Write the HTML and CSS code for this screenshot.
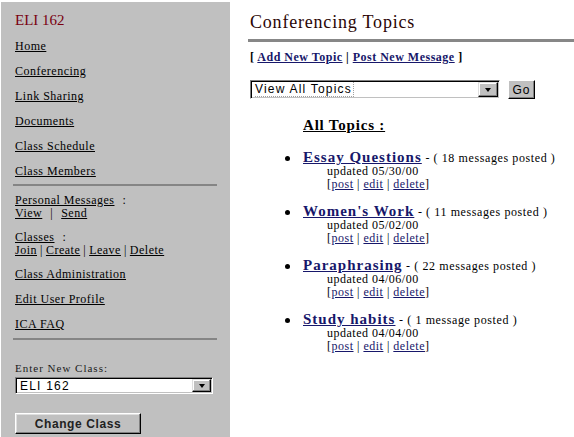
FILE: index.html
```html
<!DOCTYPE html>
<html>
<head>
<meta charset="utf-8">
<title>Conferencing Topics</title>
<link rel="stylesheet" href="styles.css">
</head>
<body>
<div class="page">
  <aside class="side">
    <div class="cls">ELI 162</div>
    <nav class="nav">
      <a href="#">Home</a>
      <a href="#">Conferencing</a>
      <a href="#">Link Sharing</a>
      <a href="#">Documents</a>
      <a href="#">Class Schedule</a>
      <a href="#">Class Members</a>
    </nav>
    <div class="rule"></div>
    <div class="group">
      <div><a href="#">Personal Messages</a><span class="colon">:</span></div>
      <div><a href="#">View</a><span class="sep wide">|</span><a href="#">Send</a></div>
    </div>
    <div class="group group2">
      <div><a href="#">Classes</a><span class="colon">:</span></div>
      <div><a href="#">Join</a><span class="sep">|</span><a href="#">Create</a><span class="sep">|</span><a href="#">Leave</a><span class="sep">|</span><a href="#">Delete</a></div>
    </div>
    <nav class="nav nav2">
      <a href="#">Class Administration</a>
      <a href="#">Edit User Profile</a>
      <a href="#">ICA FAQ</a>
    </nav>
    <div class="rule rule2"></div>
    <div class="label">Enter New Class:</div>
    <div class="sel side-sel">
      <span class="sel-text">ELI 162</span>
      <span class="arrow-btn"><span class="arrow"></span></span>
    </div>
    <div class="btn">Change Class</div>
  </aside>

  <main class="main">
    <h1 class="title">Conferencing Topics</h1>
    <div class="hr-main"></div>
    <div class="actions">[ <a href="#">Add New Topic</a> | <a href="#">Post New Message</a> ]</div>
    <div class="view-row">
      <div class="sel main-sel">
        <span class="sel-text"><span class="focus">View All Topics</span></span>
        <span class="arrow-btn"><span class="arrow"></span></span>
      </div>
      <div class="go">Go</div>
    </div>
    <div class="all">All Topics :</div>
    <ul class="topics">
      <li class="topic">
        <div class="trow"><span class="dot"></span><a class="tname" href="#">Essay Questions</a><span class="count"> - ( 18 messages posted )</span></div>
        <div class="tmeta">updated 05/30/00</div>
        <div class="tmeta">[<a href="#">post</a> | <a href="#">edit</a> | <a href="#">delete</a>]</div>
      </li>
      <li class="topic">
        <div class="trow"><span class="dot"></span><a class="tname" href="#">Women's Work</a><span class="count"> - ( 11 messages posted )</span></div>
        <div class="tmeta">updated 05/02/00</div>
        <div class="tmeta">[<a href="#">post</a> | <a href="#">edit</a> | <a href="#">delete</a>]</div>
      </li>
      <li class="topic">
        <div class="trow"><span class="dot"></span><a class="tname" href="#">Paraphrasing</a><span class="count"> - ( 22 messages posted )</span></div>
        <div class="tmeta">updated 04/06/00</div>
        <div class="tmeta">[<a href="#">post</a> | <a href="#">edit</a> | <a href="#">delete</a>]</div>
      </li>
      <li class="topic">
        <div class="trow"><span class="dot"></span><a class="tname" href="#">Study habits</a><span class="count"> - ( 1 message posted )</span></div>
        <div class="tmeta">updated 04/04/00</div>
        <div class="tmeta">[<a href="#">post</a> | <a href="#">edit</a> | <a href="#">delete</a>]</div>
      </li>
    </ul>
  </main>
</div>
</body>
</html>
```

FILE: styles.css
```css
* { box-sizing: border-box; }
html, body { margin: 0; padding: 0; height: 100%; }
body {
  background: #fff;
  color: #000;
  font-family: "Liberation Serif", "Times New Roman", serif;
  overflow: hidden;
}
.page { display: flex; height: 437px; }

/* ---------- sidebar ---------- */
.side {
  width: 229px;
  flex: none;
  margin: 2px 0 0 1px;
  background: #c0c0c0;
  padding: 9px 0 0 14px;
  font-size: 12px;
  letter-spacing: 0.5px;
}
.side a { color: #000; text-decoration: underline; }
.cls {
  font-size: 15px;
  line-height: 18px;
  letter-spacing: 0;
  color: #7a0010;
  margin-bottom: 5px;
}
.nav a { display: block; line-height: 25px; width: max-content; }
.rule {
  width: 204px;
  height: 2px;
  margin-left: -2px;
  background: #858585;
}
.group { margin-top: 8px; line-height: 13px; }
.group2 { margin-top: 11px; }
.colon { margin-left: 8px; }
.sep { margin: 0 3px; }
.sep.wide { margin: 0 8px; }
.nav2 { margin-top: 5px; }
.rule2 { margin-top: 1px; }
.label {
  margin-top: 22px;
  font-size: 11px;
  line-height: 13px;
  letter-spacing: 1px;
  color: #1a1a1a;
}

/* ---------- fake selects & buttons ---------- */
.sel {
  display: flex;
  align-items: center;
  background: #fff;
  border: 1px solid;
  border-color: #808080 #fff #fff #808080;
  box-shadow: inset 1px 1px #000, inset -1px -1px #c0c0c0;
  font-family: "Liberation Sans", Arial, sans-serif;
  font-size: 12px;
  letter-spacing: 1.2px;
  color: #000;
}
.sel-text { padding-left: 4px; line-height: 13px; }
.focus { border: 1px dotted #a0a0a0; border-left: none; border-top: none; padding-right: 1px; }
.arrow-btn {
  margin-left: auto;
  margin-right: 1px;
  display: flex;
  align-items: center;
  justify-content: center;
  background: #c0c0c0;
  border: 1px solid;
  border-color: #dfdfdf #000 #000 #dfdfdf;
  box-shadow: inset -1px -1px #808080, inset 1px 1px #fff;
}
.arrow {
  width: 0;
  height: 0;
  border-left: 3.5px solid transparent;
  border-right: 3.5px solid transparent;
  border-top: 4px solid #000;
}
.side-sel { margin-top: 2px; width: 198px; height: 17px; }
.side-sel .sel-text { padding-top: 2px; }
.side-sel .arrow-btn { width: 19px; height: 13px; }
.btn {
  margin-top: 19px;
  width: 126px;
  height: 21px;
  display: flex;
  align-items: center;
  justify-content: center;
  background: #c0c0c0;
  border: 1px solid;
  border-color: #fff #000 #000 #fff;
  box-shadow: inset -1px -1px #808080, inset 1px 1px #dfdfdf;
  font-family: "Liberation Sans", Arial, sans-serif;
  font-weight: bold;
  font-size: 12px;
  letter-spacing: 0.6px;
  color: #222;
}

/* ---------- main ---------- */
.main { flex: 1; padding: 11px 0 0 20px; }
.title {
  margin: 0;
  font-weight: normal;
  font-size: 18px;
  line-height: 22px;
  letter-spacing: 0.8px;
  color: #2a0505;
}
.hr-main {
  height: 3px;
  margin: 6px 0 0 -2px;
  background: #878787;
}
.main a { color: #17176a; text-decoration: underline; }
.actions {
  margin-top: 8px;
  font-size: 12px;
  line-height: 14px;
  font-weight: bold;
  letter-spacing: 0.5px;
}
.view-row { display: flex; margin-top: 16px; }
.main-sel { width: 250px; height: 19px; }
.main-sel .arrow-btn { width: 20px; height: 15px; }
.go {
  margin-left: 8px;
  width: 27px;
  height: 19px;
  display: flex;
  align-items: center;
  justify-content: center;
  background: #c0c0c0;
  border: 1px solid;
  border-color: #fff #000 #000 #fff;
  box-shadow: inset -1px -1px #808080;
  font-family: "Liberation Sans", Arial, sans-serif;
  font-size: 12px;
  letter-spacing: 1px;
}
.all {
  margin: 17px 0 0 53px;
  font-size: 15px;
  line-height: 18px;
  font-weight: bold;
  letter-spacing: 0.8px;
  text-decoration: underline;
}
.topics { list-style: none; margin: 16px 0 0 35px; padding: 0; }
.topic { margin-bottom: 13px; }
.trow { font-size: 12px; line-height: 12px; white-space: nowrap; }
.dot {
  display: inline-block;
  width: 5px;
  height: 5px;
  border-radius: 50%;
  background: #000;
  margin: 0 13px 1px 0;
}
.tname {
  font-size: 15px;
  line-height: 15px;
  font-weight: bold;
  letter-spacing: 1px;
}
.count { letter-spacing: 0.6px; }
.tmeta {
  padding-left: 42px;
  font-size: 12px;
  line-height: 13px;
  letter-spacing: 0.5px;
}
```
